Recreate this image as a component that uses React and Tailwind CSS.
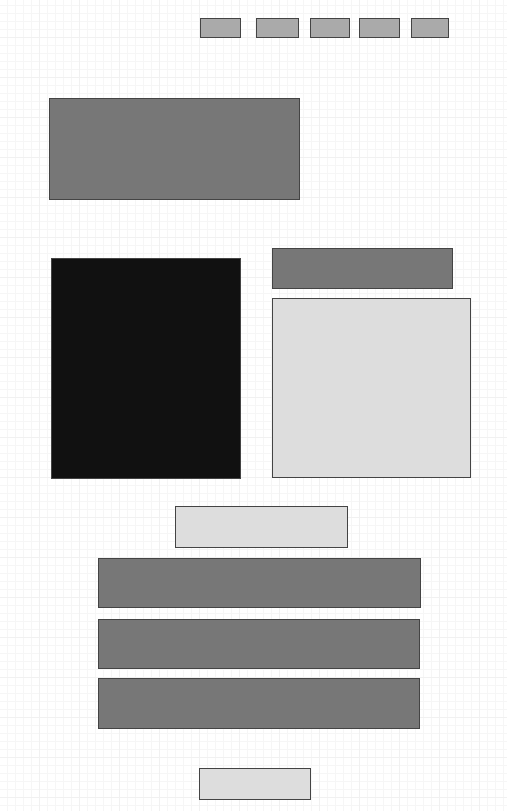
const navItems = [
  { label: 'Home', width: 'w-[41px]', space: '' },
  { label: 'About', width: 'w-[43px]', space: 'ml-[15px]' },
  { label: 'Work', width: 'w-[40px]', space: 'ml-[11px]' },
  { label: 'Blog', width: 'w-[41px]', space: 'ml-[9px]' },
  { label: 'Contact', width: 'w-[38px]', space: 'ml-[11px]' },
];

function Block({ className }) {
  return <div className={`border border-[#444] ${className}`} />;
}

export default function App() {
  return (
    <div className="min-h-screen bg-white bg-[linear-gradient(to_right,#f1f1f1_1px,transparent_1px),linear-gradient(to_bottom,#f1f1f1_1px,transparent_1px),linear-gradient(to_right,#f6f6f6_1px,transparent_1px),linear-gradient(to_bottom,#f6f6f6_1px,transparent_1px)] bg-size-[40px_40px,40px_40px,8px_8px,8px_8px] bg-position-[39px_0px,0px_37px,7px_0px,0px_5px] pt-[18px] pb-[11px]">
      <nav aria-label="Main" className="flex justify-end pr-[58px]">
        {navItems.map(({ label, width, space }) => (
          <a
            key={label}
            href="#"
            aria-label={label}
            className={`h-5 border border-[#444] bg-[#aaa] ${width} ${space}`}
          />
        ))}
      </nav>

      <main>
        <header className="mt-[60px] pr-[207px] pl-[49px]">
          <Block className="h-[102px] bg-[#777]" />
        </header>

        <section className="mt-12 grid grid-cols-[190fr_199fr] gap-x-[31px] pr-9 pl-[51px]">
          <Block className="mt-[10px] h-[221px] bg-[#111]" />
          <div>
            <Block className="mr-[18px] h-[41px] bg-[#777]" />
            <Block className="mt-[9px] h-[180px] bg-[#ddd]" />
          </div>
        </section>

        <section className="mt-[27px]">
          <div className="pr-[159px] pl-[175px]">
            <Block className="h-[42px] bg-[#ddd]" />
          </div>
          <div className="mt-[10px] pr-[86px] pl-[98px]">
            <Block className="h-[50px] bg-[#777]" />
            <Block className="mt-[11px] mr-px h-[50px] bg-[#777]" />
            <Block className="mt-[9px] mr-px h-[51px] bg-[#777]" />
          </div>
        </section>
      </main>

      <footer className="mt-[39px] pr-[196px] pl-[199px]">
        <Block className="h-8 bg-[#ddd]" />
      </footer>
    </div>
  );
}
